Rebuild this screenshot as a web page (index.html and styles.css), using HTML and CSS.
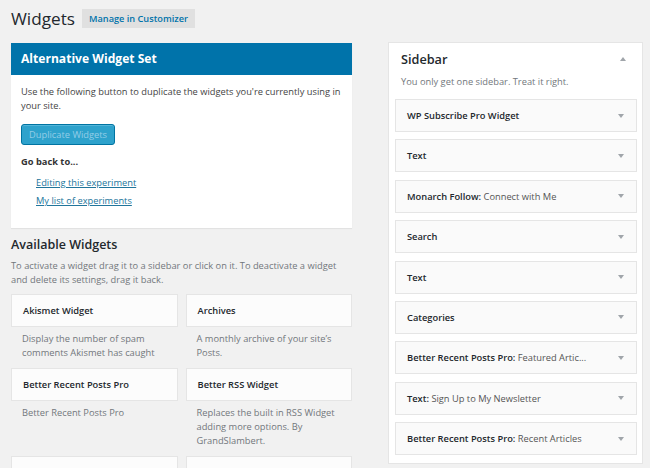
FILE: index.html
```html
<!DOCTYPE html>
<html lang="en">
<head>
<meta charset="utf-8">
<title>Widgets</title>
<link rel="stylesheet" href="styles.css">
</head>
<body>
<div class="wrap">
  <div class="page-head">
    <h1 class="page-title">Widgets</h1>
    <a class="head-btn" href="#">Manage in Customizer</a>
  </div>
  <div class="columns">
    <div class="left-col">
      <section class="alt-box">
        <h2 class="alt-title">Alternative Widget Set</h2>
        <div class="alt-body">
          <p class="alt-text">Use the following button to duplicate the widgets you're currently using in your site.</p>
          <button class="dup-btn" type="button">Duplicate Widgets</button>
          <p class="go-back">Go back to...</p>
          <ul class="back-links">
            <li><a href="#">Editing this experiment</a></li>
            <li><a href="#">My list of experiments</a></li>
          </ul>
        </div>
      </section>
      <h2 class="avail-title">Available Widgets</h2>
      <p class="avail-desc">To activate a widget drag it to a sidebar or click on it. To deactivate a widget and delete its settings, drag it back.</p>
      <div class="widget-grid">
        <div class="widget-item">
          <div class="widget-card">Akismet Widget</div>
          <p class="widget-desc">Display the number of spam comments Akismet has caught</p>
        </div>
        <div class="widget-item">
          <div class="widget-card">Archives</div>
          <p class="widget-desc">A monthly archive of your site’s Posts.</p>
        </div>
        <div class="widget-item">
          <div class="widget-card">Better Recent Posts Pro</div>
          <p class="widget-desc">Better Recent Posts Pro</p>
        </div>
        <div class="widget-item">
          <div class="widget-card">Better RSS Widget</div>
          <p class="widget-desc">Replaces the built in RSS Widget adding more options. By GrandSlambert.</p>
        </div>
        <div class="widget-item">
          <div class="widget-card">Calendar</div>
          <p class="widget-desc">A calendar of your site’s Posts.</p>
        </div>
        <div class="widget-item">
          <div class="widget-card">Categories</div>
          <p class="widget-desc">A list or dropdown of categories.</p>
        </div>
      </div>
    </div>
    <div class="right-col">
      <section class="sidebar-box">
        <div class="sidebar-head">
          <h2 class="sidebar-title">Sidebar</h2>
          <span class="arrow-up"></span>
        </div>
        <p class="sidebar-desc">You only get one sidebar. Treat it right.</p>
        <div class="sidebar-list">
          <div class="sb-widget"><span class="sb-name">WP Subscribe Pro Widget</span><span class="arrow-down"></span></div>
          <div class="sb-widget"><span class="sb-name">Text</span><span class="arrow-down"></span></div>
          <div class="sb-widget"><span class="sb-name">Monarch Follow: <span class="sb-sub">Connect with Me</span></span><span class="arrow-down"></span></div>
          <div class="sb-widget"><span class="sb-name">Search</span><span class="arrow-down"></span></div>
          <div class="sb-widget"><span class="sb-name">Text</span><span class="arrow-down"></span></div>
          <div class="sb-widget"><span class="sb-name">Categories</span><span class="arrow-down"></span></div>
          <div class="sb-widget"><span class="sb-name">Better Recent Posts Pro: <span class="sb-sub">Featured Artic...</span></span><span class="arrow-down"></span></div>
          <div class="sb-widget"><span class="sb-name">Text: <span class="sb-sub">Sign Up to My Newsletter</span></span><span class="arrow-down"></span></div>
          <div class="sb-widget"><span class="sb-name">Better Recent Posts Pro: <span class="sb-sub">Recent Articles</span></span><span class="arrow-down"></span></div>
        </div>
      </section>
    </div>
  </div>
</div>
</body>
</html>
```

FILE: styles.css
```css
html, body {
  margin: 0;
  padding: 0;
}
body {
  background: #f1f1f1;
  font-family: "Open Sans", "Liberation Sans", sans-serif;
  font-size: 9.3px;
  color: #444;
  overflow: hidden;
}
.wrap {
  padding: 0 0 0 11px;
  width: 632px;
}
.page-head {
  display: flex;
  align-items: center;
  gap: 7px;
  height: 37px;
}
.page-title {
  margin: 0;
  font-size: 17.2px;
  font-weight: 400;
  color: #23282d;
  line-height: 37px;
}
.head-btn {
  display: inline-block;
  background: #e0e0e0;
  color: #0073aa;
  font-weight: 600;
  font-size: 9.2px;
  text-decoration: none;
  padding: 0 7px;
  height: 19px;
  line-height: 19px;
}
.columns {
  display: flex;
  gap: 36px;
  margin-top: 6px;
}
.left-col {
  width: 341px;
  flex: none;
}
.right-col {
  width: 255px;
  flex: none;
  margin-top: -1px;
}
.alt-box {
  background: #fff;
  box-shadow: 0 1px 1px rgba(0,0,0,0.06);
}
.alt-title {
  margin: 0;
  background: #0073aa;
  color: #fff;
  font-size: 12.1px;
  font-weight: 700;
  height: 32px;
  line-height: 32px;
  padding: 0 10px;
}
.alt-body {
  padding: 10px 10px 18px;
}
.alt-text {
  margin: 0;
  line-height: 14px;
}
.dup-btn {
  display: block;
  margin-top: 11px;
  height: 21px;
  padding: 0 7px;
  background: #2ea2cc;
  border: 1px solid #0074a2;
  border-radius: 3px;
  color: #94cde7;
  font-family: inherit;
  font-size: 9.3px;
  box-shadow: inset 0 1px 0 rgba(120,200,230,0.5);
}
.go-back {
  margin: 10px 0 0;
  font-weight: 700;
  color: #333;
  line-height: 14px;
}
.back-links {
  list-style: none;
  margin: 5px 0 0;
  padding: 0 0 0 15px;
}
.back-links li {
  line-height: 18px;
}
.back-links a {
  color: #21759b;
}
.avail-title {
  margin: 8px 0 0;
  font-size: 12.5px;
  font-weight: 600;
  color: #23282d;
  line-height: 18px;
}
.avail-desc {
  margin: 5px 0 0;
  color: #72777c;
  line-height: 14px;
}
.widget-grid {
  display: grid;
  grid-template-columns: 1fr 1fr;
  column-gap: 8px;
  margin-top: 7px;
}
.widget-card {
  background: #fcfcfc;
  border: 1px solid #e5e5e5;
  height: 31px;
  line-height: 31px;
  padding: 0 11px;
  font-weight: 600;
  color: #23282d;
}
.widget-desc {
  margin: 0;
  padding: 5px 11px 8px;
  color: #72777c;
  line-height: 14px;
}
.sidebar-box {
  background: #fff;
  border: 1px solid #e5e5e5;
  padding: 0 5px 8px 6px;
}
.sidebar-head {
  display: flex;
  justify-content: space-between;
  align-items: center;
  padding: 0 11px 0 6px;
  height: 32px;
}
.sidebar-title {
  margin: 0;
  font-size: 12.7px;
  font-weight: 600;
  color: #23282d;
}
.sidebar-desc {
  margin: 0;
  padding: 0 6px;
  color: #72777c;
  line-height: 14px;
}
.sidebar-list {
  display: flex;
  flex-direction: column;
  gap: 7.4px;
  margin-top: 10px;
}
.sb-widget {
  display: flex;
  align-items: center;
  justify-content: space-between;
  background: #fafafa;
  border: 1px solid #e5e5e5;
  height: 31px;
  padding: 0 12px 0 11px;
}
.sb-name {
  font-weight: 600;
  color: #23282d;
}
.sb-sub {
  font-weight: 400;
  color: #555;
}
.arrow-down {
  width: 0;
  height: 0;
  border-left: 3.5px solid transparent;
  border-right: 3.5px solid transparent;
  border-top: 4px solid #a0a5aa;
}
.arrow-up {
  width: 0;
  height: 0;
  border-left: 3.5px solid transparent;
  border-right: 3.5px solid transparent;
  border-bottom: 4px solid #a0a5aa;
}
```
